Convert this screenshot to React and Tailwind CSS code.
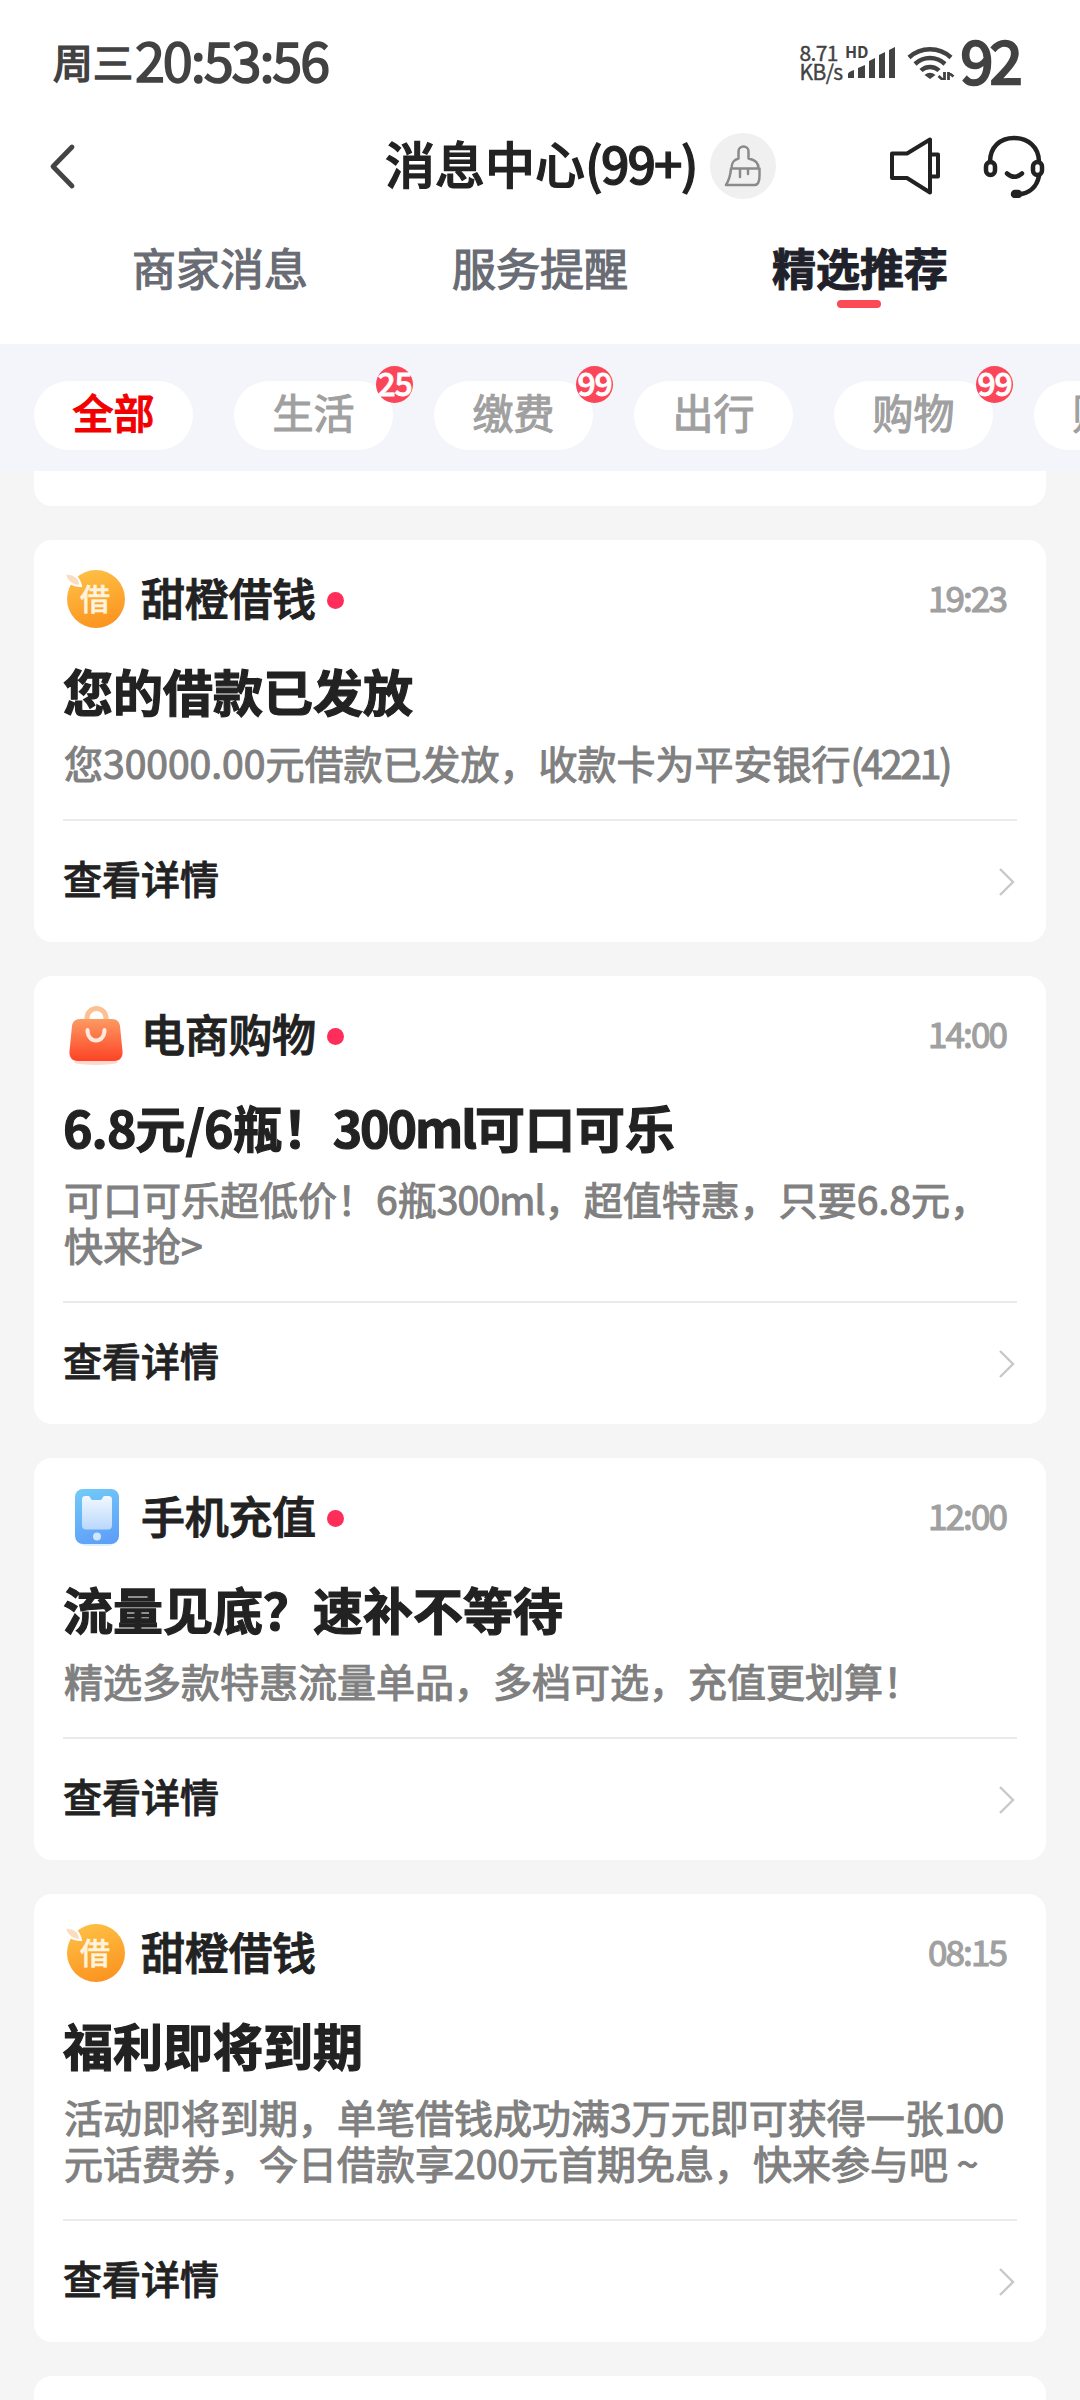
import { useState } from 'react';

const tabs = ['商家消息', '服务提醒', '精选推荐'];

const filters = [
  { label: '全部' },
  { label: '生活', badge: 25 },
  { label: '缴费', badge: 99 },
  { label: '出行' },
  { label: '购物', badge: 99 },
  { label: '财务' },
];

const messages = [
  {
    id: 1,
    icon: 'orange',
    name: '甜橙借钱',
    unread: true,
    time: '19:23',
    title: '您的借款已发放',
    lines: ['您30000.00元借款已发放，收款卡为平安银行(4221)'],
  },
  {
    id: 2,
    icon: 'bag',
    name: '电商购物',
    unread: true,
    time: '14:00',
    title: '6.8元/6瓶！300ml可口可乐',
    lines: ['可口可乐超低价！6瓶300ml，超值特惠，只要6.8元，', '快来抢>'],
  },
  {
    id: 3,
    icon: 'phone',
    name: '手机充值',
    unread: true,
    time: '12:00',
    title: '流量见底？速补不等待',
    lines: ['精选多款特惠流量单品，多档可选，充值更划算！'],
  },
  {
    id: 4,
    icon: 'orange',
    name: '甜橙借钱',
    unread: false,
    time: '08:15',
    title: '福利即将到期',
    lines: ['活动即将到期，单笔借钱成功满3万元即可获得一张100', '元话费券，今日借款享200元首期免息，快来参与吧 ~'],
  },
];

// tighten runs of digits and latin letters that sit between Chinese characters
function MixedText({ text, tight }) {
  return text.split(/([\x21-\x7d]+)/).map((run, i) => {
    if (/[(1]/.test(run)) return <span key={i} className="tracking-[-2.2px]">{run}</span>;
    if (/[a-z]/.test(run)) return <span key={i} className={tight ? 'tracking-[-2px]' : 'tracking-[-0.8px]'}>{run}</span>;
    if (tight && i % 2 === 1) return <span key={i} className="tracking-[-0.9px]">{run}</span>;
    return run;
  });
}

function OrangeIcon() {
  return (
    <svg width="64" height="64" viewBox="0 0 64 64">
      <defs>
        <linearGradient id="orangeFill" x1="0.3" y1="0" x2="0.6" y2="1">
          <stop offset="0" stopColor="#fdc044" />
          <stop offset="1" stopColor="#fc9320" />
        </linearGradient>
      </defs>
      <circle cx="33" cy="33" r="29" fill="url(#orangeFill)" />
      <path d="M2 8c8-1 14 3 16 12-9 0-14-4-16-12z" fill="#fbdcc0" stroke="#fff" strokeWidth="2" />
      <text x="32" y="44" textAnchor="middle" fontSize="30" fontWeight="500" fill="#fff3de" stroke="#fff3de" strokeWidth="0.500">借</text>
    </svg>
  );
}

function BagIcon() {
  return (
    <svg width="64" height="64" viewBox="0 0 64 64">
      <defs>
        <linearGradient id="bagFill" x1="0" y1="0" x2="0" y2="1">
          <stop offset="0" stopColor="#fd9a62" />
          <stop offset="1" stopColor="#fd4326" />
        </linearGradient>
      </defs>
      <ellipse cx="33" cy="60" rx="22" ry="3" fill="#ffd9d0" />
      <path d="M24 20v-4a9 9 0 0 1 19 0v4" fill="none" stroke="#fcc193" strokeWidth="5" />
      <path
        d="M17 17h32c5 0 7.500 3 8 7l2.500 25c.6 6-2.500 10-8 10h-37c-5.500 0-8.600-4-8-10l2.500-25c.5-4 3-7 8-7z"
        fill="url(#bagFill)"
      />
      <path d="M24.500 28c0 14 17 14 17 0" fill="none" stroke="#ffe9de" strokeWidth="4" strokeLinecap="round" />
    </svg>
  );
}

function PhoneIcon() {
  return (
    <svg width="64" height="64" viewBox="0 0 64 64">
      <defs>
        <linearGradient id="phoneFill" x1="0.3" y1="0" x2="0.6" y2="1">
          <stop offset="0" stopColor="#70c8f8" />
          <stop offset="1" stopColor="#5f9ff8" />
        </linearGradient>
        <linearGradient id="phoneScreen" x1="0" y1="0" x2="0" y2="1">
          <stop offset="0" stopColor="#f2f8ff" />
          <stop offset="1" stopColor="#b9d8fd" />
        </linearGradient>
      </defs>
      <rect x="15" y="9" width="38" height="53" rx="8" fill="#d8f1fd" />
      <rect x="12" y="5" width="44" height="55" rx="8" fill="url(#phoneFill)" />
      <path
        d="M22 12h3.500c2 0 2 4 4 4h8c2 0 2-4 4-4h4c2.500 0 3.500 1.500 3.500 3.500v26c0 2.500-1.500 4-4 4h-22c-2.500 0-4-1.500-4-4v-26c0-2 1-3.500 3-3.500z"
        fill="url(#phoneScreen)"
      />
      <circle cx="34" cy="52.500" r="4" fill="#cfe6ff" />
    </svg>
  );
}

const icons = { orange: OrangeIcon, bag: BagIcon, phone: PhoneIcon };

function StatusBar() {
  return (
    <div className="flex h-[124px] items-center justify-between pl-[53px] pr-[61px] text-[#424242]">
      <div className="flex items-center pb-[7px] [-webkit-text-stroke:1.6px_#424242]">
        <span className="pt-1 text-[40px] leading-none">周三</span>
        <span className="ml-[2px] text-[54px] leading-none tracking-[-2.1px]">20:53:56</span>
      </div>
      <div className="flex items-center">
        <div className="mr-[7px] w-[40px] text-[21px] leading-[19px] tracking-[-0.6px] [-webkit-text-stroke:0.4px_#424242]">
          <div>8.71</div>
          <div>KB/s</div>
        </div>
        <svg width="52" height="36" viewBox="0 0 52 36" fill="#424242" className="mr-[8px] overflow-visible">
          <text x="-2" y="14" fontSize="16" fontWeight="700">HD</text>
          <path d="M1 34v-4q0-2 6-4v8zM11 34v-10l7-3v13zM22 34V17l6-3v20zM32 34V11l6-3v26zM42 34V6l6-3v31z" />
        </svg>
        <svg width="48" height="36" viewBox="0 0 48 36" fill="none" stroke="#424242" strokeWidth="4.500" className="mr-[6px]">
          <path d="M2 13.500a31 31 0 0 1 42 0M8 20a22 22 0 0 1 30 0M14 26.500a13 13 0 0 1 18 0" />
          <path d="M17.500 31q5.500-4.500 11 0L23 35z" fill="#424242" stroke="none" />
          <path d="M37.500 28v8M36 36l-4.500-4M41.500 36v-8M42 29l4.500 3.500" strokeWidth="2.800" />
        </svg>
        <span className="pb-[7px] text-[59px] leading-none tracking-[-3.500px] [-webkit-text-stroke:2.500px_#424242]">92</span>
      </div>
    </div>
  );
}

function NavBar() {
  return (
    <div className="flex h-[84px] items-center pl-[47px] pr-[34px]">
      <svg width="30" height="48" viewBox="0 0 30 48" fill="none" stroke="#444" strokeWidth="4.800" strokeLinecap="round" strokeLinejoin="round">
        <path d="M25 5L6 24.500L25 44" />
      </svg>
      <h1 className="ml-[308px] whitespace-nowrap pb-[8px] text-[50px] font-medium leading-none text-[#222] [-webkit-text-stroke:1.200px_#222]">
        消息中心<span className="tracking-[-1.900px]">(99+)</span>
      </h1>
      <div className="ml-[13px] flex size-[66px] items-center justify-center rounded-full bg-[#f0f0f0]">
        <svg width="38" height="44" viewBox="0 0 38 44" fill="none" stroke="#8a8a8a" strokeWidth="2.500" strokeLinejoin="round" strokeLinecap="round">
          <path d="M7.500 24.500c0-6 2-8.500 7-10V7.500a5 5 0 0 1 10 0v7c8 2 10 5 10 10M7 24.500h28.500v7c0 5-1 9.500-5 9.500H2c3-5 4.500-9 5-16.500M16 26v7M24 26v4" />
        </svg>
      </div>
      <div className="ml-auto flex items-center gap-[42px]">
        <svg width="52" height="60" viewBox="0 0 52 60" fill="none" stroke="#222" strokeWidth="4" strokeLinejoin="round">
          <path d="M4 17.500h15L42 3.500v53L19 42H4zM42 18.500h8v22h-8" />
        </svg>
        <svg width="64" height="64" viewBox="0 0 64 64" fill="none" stroke="#222" strokeWidth="4.500" strokeLinecap="round">
          <path d="M8 28C8 13 18 4 32 4s25 9 25 24" />
          <rect x="4" y="28" width="9" height="13" rx="4.500" />
          <rect x="51" y="28" width="9" height="13" rx="4.500" />
          <path d="M57 42c-2 10-9 18-22 18.500M25 39.500q7.500 6.500 15 0" />
          <rect x="30" y="57" width="9" height="6" rx="3" fill="#222" strokeWidth="2.500" />
        </svg>
      </div>
    </div>
  );
}

function MessageCard({ message }) {
  const Icon = icons[message.icon];
  return (
    <div className="rounded-[18px] bg-white px-[29px] pt-[26px]">
      <div className="flex h-16 items-center">
        <Icon />
        <span className="ml-[14px] pb-[3px] text-[44px] font-medium leading-none tracking-[-0.3px] text-[#222] [-webkit-text-stroke:1px_#222]">{message.name}</span>
        {message.unread && <span className="ml-[11px] mt-1 size-[17px] rounded-full bg-[#ff2d59]" />}
        <span className="ml-auto mr-[11px] pb-[4px] text-[35px] leading-none tracking-[-1.900px] text-[#a0a0a0] [-webkit-text-stroke:1.200px_#a0a0a0]">
          {message.time}
        </span>
      </div>
      <h2 className="mt-[30px] whitespace-nowrap text-[50px] font-bold leading-[60px] text-[#222] [-webkit-text-stroke:1.200px_#222]">
        <MixedText text={message.title} tight />
      </h2>
      <div className="ml-px mt-[19px] whitespace-nowrap text-[39px] leading-[46px] text-[#808080] [-webkit-text-stroke:1.100px_#808080]">
        {message.lines.map((line) => (
          <p key={line}><MixedText text={line} /></p>
        ))}
      </div>
      <div className="mt-[34px] flex h-[123px] items-center justify-between border-t-2 border-[#ebebeb]">
        <span className="pb-[9px] text-[39px] font-medium leading-none text-[#222] [-webkit-text-stroke:0.800px_#222]">查看详情</span>
        <svg width="18" height="30" viewBox="0 0 18 30" fill="none" stroke="#c8c8c8" strokeWidth="2.400">
          <path d="M1 2L14 15L1 28" />
        </svg>
      </div>
    </div>
  );
}

export default function App() {
  const [activeTab, setActiveTab] = useState(2);
  const [activeFilter, setActiveFilter] = useState(0);

  return (
    <div className="h-[2400px] w-[1080px] overflow-hidden bg-[#f5f5f5] font-['Noto_Sans_CJK_SC',sans-serif]">
      <header className="h-[344px] bg-white">
        <StatusBar />
        <NavBar />
        <nav className="grid grid-cols-3 px-[60px] pt-[27px]">
          {tabs.map((tab, i) => (
            <button key={tab} onClick={() => setActiveTab(i)} className="flex flex-col items-center">
              {i === activeTab ? (
                <>
                  <span className="text-[44px] font-bold leading-[64px] text-[#1f222a] [-webkit-text-stroke:1px_#1f222a]">{tab}</span>
                  <span className="mr-[2px] mt-px h-2 w-[44px] rounded-full bg-[#fb4a55]" />
                </>
              ) : (
                <span className="text-[44px] leading-[64px] text-[#696c74] [-webkit-text-stroke:1.200px_#696c74]">{tab}</span>
              )}
            </button>
          ))}
        </nav>
      </header>

      <div className="flex h-[127px] gap-[41px] overflow-hidden bg-[#f4f5fa] pl-[34px] pt-[37px]">
        {filters.map((filter, i) => (
          <button
            key={filter.label}
            onClick={() => setActiveFilter(i)}
            className="relative flex h-[69px] w-[159px] shrink-0 items-center justify-center rounded-full bg-white pb-[8px]"
          >
            {i === activeFilter ? (
              <span className="text-[41px] font-medium leading-none text-[#f20000] [-webkit-text-stroke:1px_#f20000]">{filter.label}</span>
            ) : (
              <span className="text-[41px] leading-none text-[#a0a0a0] [-webkit-text-stroke:1.100px_#a0a0a0]">{filter.label}</span>
            )}
            {filter.badge && (
              <span className="absolute -top-[15px] left-[142px] flex size-[37px] items-center justify-center rounded-full bg-[#fb4659] pb-[6px] text-[32px] font-medium leading-none tracking-[-1.200px] text-white [-webkit-text-stroke:0.800px_#fff]">
                {filter.badge}
              </span>
            )}
          </button>
        ))}
      </div>

      <main className="px-[34px]">
        <div className="h-[35px] rounded-b-[18px] bg-white" />
        <div className="mt-[34px] flex flex-col gap-[34px]">
          {messages.map((message) => (
            <MessageCard key={message.id} message={message} />
          ))}
          <div className="h-[60px] rounded-t-[18px] bg-white" />
        </div>
      </main>
    </div>
  );
}
